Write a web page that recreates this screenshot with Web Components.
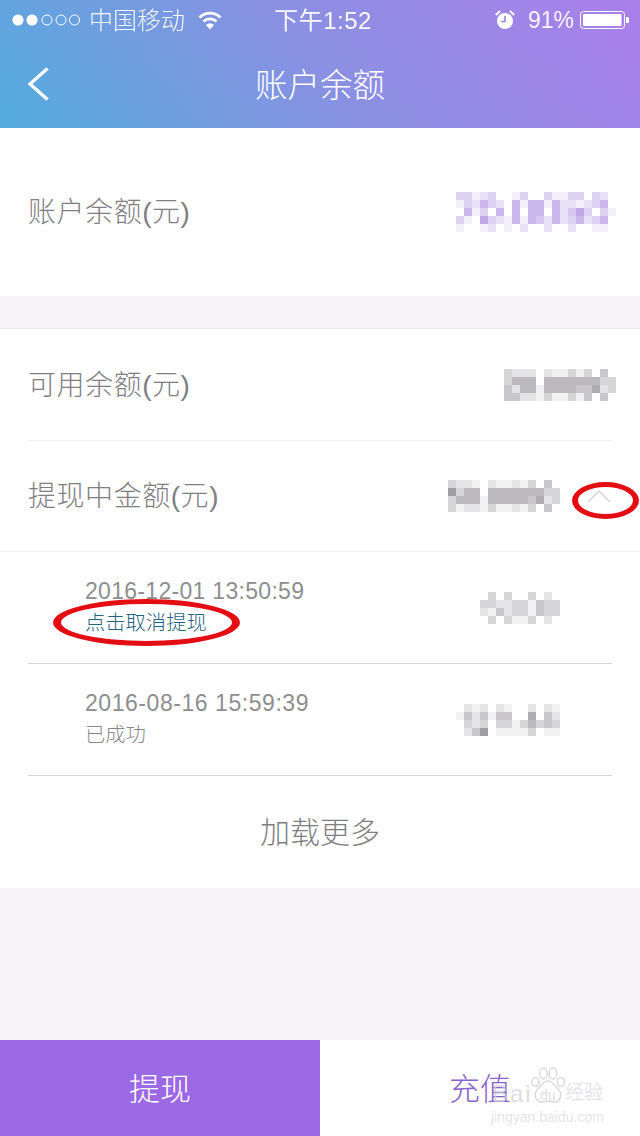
<!DOCTYPE html>
<html lang="zh">
<head>
<meta charset="utf-8">
<title>账户余额</title>
<style>
    html, body { margin: 0; padding: 0; background: #f6f4f8; }
    body { font-family: "Liberation Sans", "Noto Sans CJK SC", sans-serif; }
</style>
</head>
<body>
<balance-app></balance-app>

<script>
const CJK = `"Liberation Sans", "Noto Sans CJK SC", sans-serif`;

class StatusBar extends HTMLElement {
    constructor() {
        super();
        this.attachShadow({ mode: 'open' });
        this.shadowRoot.innerHTML = `
            <style>
                :host {
                    display: grid;
                    grid-template-columns: 1fr auto 1fr;
                    align-items: center;
                    height: 40px;
                    color: #fff;
                    font-family: ${CJK};
                    font-size: 24px;
                }
                .left, .right { display: flex; align-items: center; }
                .left { padding-left: 12px; }
                .right { justify-content: flex-end; padding-right: 11px; }
                .carrier { margin-left: 8px; padding-bottom: 4px; font-weight: 300; opacity: .92; }
                .wifi { margin-left: 13px; }
                .time { font-weight: 400; font-size: 24px; letter-spacing: .5px; padding: 0 0 3px 6px; opacity: .95; }
                .pct { margin: 0 6px 0 13px; font-size: 23px; font-weight: 300; opacity: .92; }
                svg { display: block; }
            </style>
            <div class="left">
                <svg width="69" height="14" viewBox="0 0 69 14">
                    <circle cx="6" cy="7" r="5.6" fill="#fff"/>
                    <circle cx="20" cy="7" r="5.6" fill="#fff"/>
                    <circle cx="35" cy="7" r="5" fill="none" stroke="#fff" stroke-width="1"/>
                    <circle cx="49" cy="7" r="5" fill="none" stroke="#fff" stroke-width="1"/>
                    <circle cx="62.500" cy="7" r="5" fill="none" stroke="#fff" stroke-width="1"/>
                </svg>
                <span class="carrier">中国移动</span>
                <svg class="wifi" width="24" height="19" viewBox="0 0 24 19">
                    <path d="M1.500 6.500a15 15 0 0 1 21 0" fill="none" stroke="#fff" stroke-width="2.800"/>
                    <path d="M5.500 10.500a9.500 9.500 0 0 1 13 0" fill="none" stroke="#fff" stroke-width="2.800"/>
                    <path d="M12 18.500l-4-4.500a5.500 5.500 0 0 1 8 0z" fill="#fff"/>
                </svg>
            </div>
            <div class="time">下午1:52</div>
            <div class="right">
                <svg width="20" height="20" viewBox="0 0 20 20">
                    <circle cx="10" cy="11" r="8" fill="#fff"/>
                    <path d="M10 6v5.500H6" fill="none" stroke="#9a86e6" stroke-width="1.600"/>
                    <path d="M0.800 5L5 1M19.200 5L15 1" stroke="#fff" stroke-width="2"/>
                </svg>
                <span class="pct">91%</span>
                <svg width="49" height="18" viewBox="0 0 49 18">
                    <rect x="0.500" y="0.500" width="44" height="17" rx="3" fill="none" stroke="#fff"/>
                    <rect x="3" y="3" width="38.500" height="12" rx="1" fill="#fff"/>
                    <path d="M46 6h1.500a1.500 1.500 0 0 1 1.500 1.500v3a1.500 1.500 0 0 1-1.500 1.500H46z" fill="#fff"/>
                </svg>
            </div>
        `;
    }
}

class AppHeader extends HTMLElement {
    constructor() {
        super();
        this.attachShadow({ mode: 'open' });
        this.shadowRoot.innerHTML = `
            <style>
                :host {
                    display: block;
                    flex: none;
                    background: linear-gradient(50deg, #52acde 0%, #8a90e2 50%, #ab7fea 100%);
                    color: #fff;
                    font-family: ${CJK};
                }
                .nav {
                    display: grid;
                    grid-template-columns: 100px 1fr 100px;
                    align-items: center;
                    height: 88px;
                }
                .back { padding-left: 26px; display: flex; }
                .title { text-align: center; font-size: 32.500px; font-weight: 300; padding-bottom: 4px; }
            </style>
            <status-bar></status-bar>
            <div class="nav">
                <div class="back">
                    <svg width="24" height="36" viewBox="0 0 24 36">
                        <path d="M21.500 2.500L4 18l17.500 15.500" fill="none" stroke="#fff" stroke-width="3.200"/>
                    </svg>
                </div>
                <div class="title"><slot></slot></div>
                <div></div>
            </div>
        `;
    }
}

// pixelated amount, one hex digit of strength per cell, rows split by "/"
class MosaicBlur extends HTMLElement {
    constructor() {
        super();
        this.attachShadow({ mode: 'open' });
    }

    connectedCallback() {
        const rows = this.getAttribute('cells').split('/');
        const rgb = this.getAttribute('tint') || '120,116,124';
        let cells = '';
        for (const row of rows) {
            for (const c of row) {
                const alpha = (parseInt(c, 16) / 10).toFixed(2);
                cells += `<i style="background: rgba(${rgb}, ${alpha})"></i>`;
            }
        }
        this.shadowRoot.innerHTML = `
            <style>
                :host {
                    display: grid;
                    grid-template-columns: repeat(${rows[0].length}, 8px);
                    grid-auto-rows: 8px;
                    flex: none;
                    filter: blur(.4px);
                }
                i { display: block; }
            </style>
            ${cells}
        `;
    }
}

class AmountRow extends HTMLElement {
    constructor() {
        super();
        this.attachShadow({ mode: 'open' });
        this.shadowRoot.innerHTML = `
            <style>
                :host {
                    display: flex;
                    align-items: center;
                    justify-content: space-between;
                    box-sizing: border-box;
                    height: var(--row-height, 111px);
                    padding: 0 24px 0 28px;
                    color: #7f7f83;
                    font-family: ${CJK};
                    font-size: 28px;
                    font-weight: 300;
                    background: #fff;
                }
                .label { padding-bottom: 4px; letter-spacing: .55px; }
                .right { display: flex; align-items: center; }
            </style>
            <div class="label"><slot name="label"></slot></div>
            <div class="right"><slot></slot></div>
        `;
    }
}

class RecordRow extends HTMLElement {
    constructor() {
        super();
        this.attachShadow({ mode: 'open' });
        this.shadowRoot.innerHTML = `
            <style>
                :host {
                    display: flex;
                    align-items: center;
                    justify-content: space-between;
                    box-sizing: border-box;
                    height: 112px;
                    margin: 0 28px;
                    padding: 0 52px 0 57px;
                    border-bottom: 1px solid #d6d5d8;
                    font-family: ${CJK};
                }
                .info { padding-top: 1px; }
                .date { font-size: 23px; line-height: 27px; color: #8e8e90; letter-spacing: var(--date-spacing, .3px); }
                .state { margin-top: 3px; font-size: 20.300px; line-height: 30px; font-weight: 300; color: var(--state-color, #88888a); }
            </style>
            <div class="info">
                <div class="date"><slot name="date"></slot></div>
                <div class="state"><slot name="state"></slot></div>
            </div>
            <slot></slot>
        `;
    }
}

// red marker ring somebody drew over the screenshot
class InkOval extends HTMLElement {
    constructor() {
        super();
        this.attachShadow({ mode: 'open' });
    }

    connectedCallback() {
        const w = +this.getAttribute('w');
        const h = +this.getAttribute('h');
        const side = +this.getAttribute('side');
        const top = 5;
        this.shadowRoot.innerHTML = `
            <style>
                :host {
                    position: absolute;
                    left: ${this.getAttribute('x')}px;
                    top: ${this.getAttribute('y')}px;
                    width: ${w}px;
                    height: ${h}px;
                }
                svg { display: block; }
            </style>
            <svg width="${w}" height="${h}" viewBox="0 0 ${w} ${h}">
                <path fill="#e50d14" fill-rule="evenodd" d="M0 ${h / 2}a${w / 2} ${h / 2} 0 1 0 ${w} 0a${w / 2} ${h / 2} 0 1 0 ${-w} 0z
                    M${side} ${h / 2}a${w / 2 - side} ${h / 2 - top} 0 1 1 ${w - 2 * side} 0a${w / 2 - side} ${h / 2 - top} 0 1 1 ${-(w - 2 * side)} 0z"/>
            </svg>
        `;
    }
}

class BaiduMark extends HTMLElement {
    constructor() {
        super();
        this.attachShadow({ mode: 'open' });
        this.shadowRoot.innerHTML = `
            <style>
                :host {
                    position: absolute;
                    left: 490px;
                    top: 1064px;
                    width: 120px;
                    height: 62px;
                    color: rgba(205, 205, 212, .7);
                    font-family: "Liberation Sans", "Noto Sans CJK SC", sans-serif;
                }
                svg { position: absolute; left: 41px; top: 3px; }
                .bai { position: absolute; left: 2px; top: 15px; font: 24px/30px "Liberation Sans", sans-serif; letter-spacing: 2px; }
                .du { position: absolute; left: 50px; top: 23px; font: 14px/16px "Liberation Sans", sans-serif; }
                .jy { position: absolute; left: 75px; top: 16px; font-size: 19px; font-weight: 300; line-height: 26px; color: #fff; -webkit-text-stroke: .5px rgba(205, 205, 212, .7); }
                .url { position: absolute; left: 1px; top: 44px; font-size: 14px; line-height: 18px; white-space: nowrap; color: rgba(222, 222, 226, .8); }
            </style>
            <span class="bai">Bai</span>
            <svg width="34" height="37" viewBox="0 0 34 37" fill="none" stroke="rgba(205,205,212,.75)" stroke-width="1.500">
                <ellipse cx="4.500" cy="15" rx="3.500" ry="4.500"/>
                <ellipse cx="12.500" cy="6.500" rx="3.800" ry="5.500"/>
                <ellipse cx="22" cy="6.500" rx="3.800" ry="5.500"/>
                <ellipse cx="30" cy="15" rx="3.500" ry="4.500"/>
                <path d="M17 14c5 0 7 5 11 9 4 5 1 12-5 12-3 0-4-1-6-1s-3 1-6 1c-6 0-9-7-5-12 4-4 6-9 11-9z"/>
            </svg>
            <span class="du">du</span>
            <span class="jy">经验</span>
            <span class="url">jingyan.baidu.com</span>
        `;
    }
}

class BalanceApp extends HTMLElement {
    constructor() {
        super();
        this.attachShadow({ mode: 'open' });
        this.shadowRoot.innerHTML = `
            <style>
                :host {
                    display: flex;
                    flex-direction: column;
                    position: relative;
                    width: 640px;
                    height: 1136px;
                    overflow: hidden;
                    background: #f6f4f8;
                    font-family: ${CJK};
                }
                .total { --row-height: 168px; flex: none; }
                .panel {
                    flex: none;
                    margin-top: 32px;
                    background: #fff;
                    border-top: 1px solid #e9e8ec;
                }
                .sep { height: 1px; margin: 0 28px; background: #f0eff2; }
                .sep-full { height: 1px; background: #f0eff2; }
                .chevron { margin: 0 5px 0 27px; display: block; }
                .more {
                    height: 112px;
                    display: flex;
                    align-items: center;
                    justify-content: center;
                    box-sizing: border-box;
                    padding-bottom: 4px;
                    color: #7f7f83;
                    font-size: 30px;
                    font-weight: 300;
                }
                .spacer { flex: 1; }
                .actions { display: grid; grid-template-columns: 1fr 1fr; height: 96px; flex: none; }
                .actions div {
                    display: flex;
                    align-items: center;
                    justify-content: center;
                    box-sizing: border-box;
                    padding-bottom: 4px;
                    font-size: 31px;
                    font-weight: 300;
                }
                .withdraw { background: #9b69e4; color: #fff; }
                .topup { background: #fff; color: #8a62cf; }
                .cancel { --state-color: #1f6480; }
                .second { --date-spacing: .55px; }
            </style>
            <app-header>账户余额</app-header>
            <amount-row class="total">
                <span slot="label">账户余额(元)</span>
                <mosaic-blur tint="150,110,215" cells="33123001300311330320/13253205155152212350/05130505055052463031/31063215154252352350/10012010200200200110"></mosaic-blur>
            </amount-row>
            <div class="panel">
                <amount-row>
                    <span slot="label">可用余额(元)</span>
                    <mosaic-blur cells="32220211313040/35550555555533/42551555544623/44221311314040"></mosaic-blur>
                </amount-row>
                <div class="sep"></div>
                <amount-row style="--row-height: 110px">
                    <span slot="label">提现中金额(元)</span>
                    <mosaic-blur cells="32210211213040/73550555555533/35551555554623/31221311213040"></mosaic-blur>
                    <svg class="chevron" width="24" height="14" viewBox="0 0 24 14">
                        <path d="M1 13L12 2l11 11" fill="none" stroke="#d5d5dc" stroke-width="1.500"/>
                    </svg>
                </amount-row>
                <div class="sep-full"></div>
                <record-row class="cancel">
                    <span slot="date">2016-12-01 13:50:59</span>
                    <span slot="state">点击取消提现</span>
                    <mosaic-blur cells="0303003020/3322331433/2142331433/0303113020"></mosaic-blur>
                </record-row>
                <record-row class="second">
                    <span slot="date">2016-08-16 15:59:39</span>
                    <span slot="state">已成功</span>
                    <mosaic-blur cells="0212021002021/1424144006042/0323033135343/0247011113011"></mosaic-blur>
                </record-row>
                <div class="more">加载更多</div>
            </div>
            <div class="spacer"></div>
            <div class="actions">
                <div class="withdraw">提现</div>
                <div class="topup">充值</div>
            </div>
            <ink-oval x="572" y="482" w="67" h="37" side="6"></ink-oval>
            <ink-oval x="53" y="599" w="187" h="47" side="8"></ink-oval>
            <baidu-mark></baidu-mark>
        `;
    }
}

customElements.define('status-bar', StatusBar);
customElements.define('app-header', AppHeader);
customElements.define('mosaic-blur', MosaicBlur);
customElements.define('amount-row', AmountRow);
customElements.define('record-row', RecordRow);
customElements.define('ink-oval', InkOval);
customElements.define('baidu-mark', BaiduMark);
customElements.define('balance-app', BalanceApp);
</script>
</body>
</html>
